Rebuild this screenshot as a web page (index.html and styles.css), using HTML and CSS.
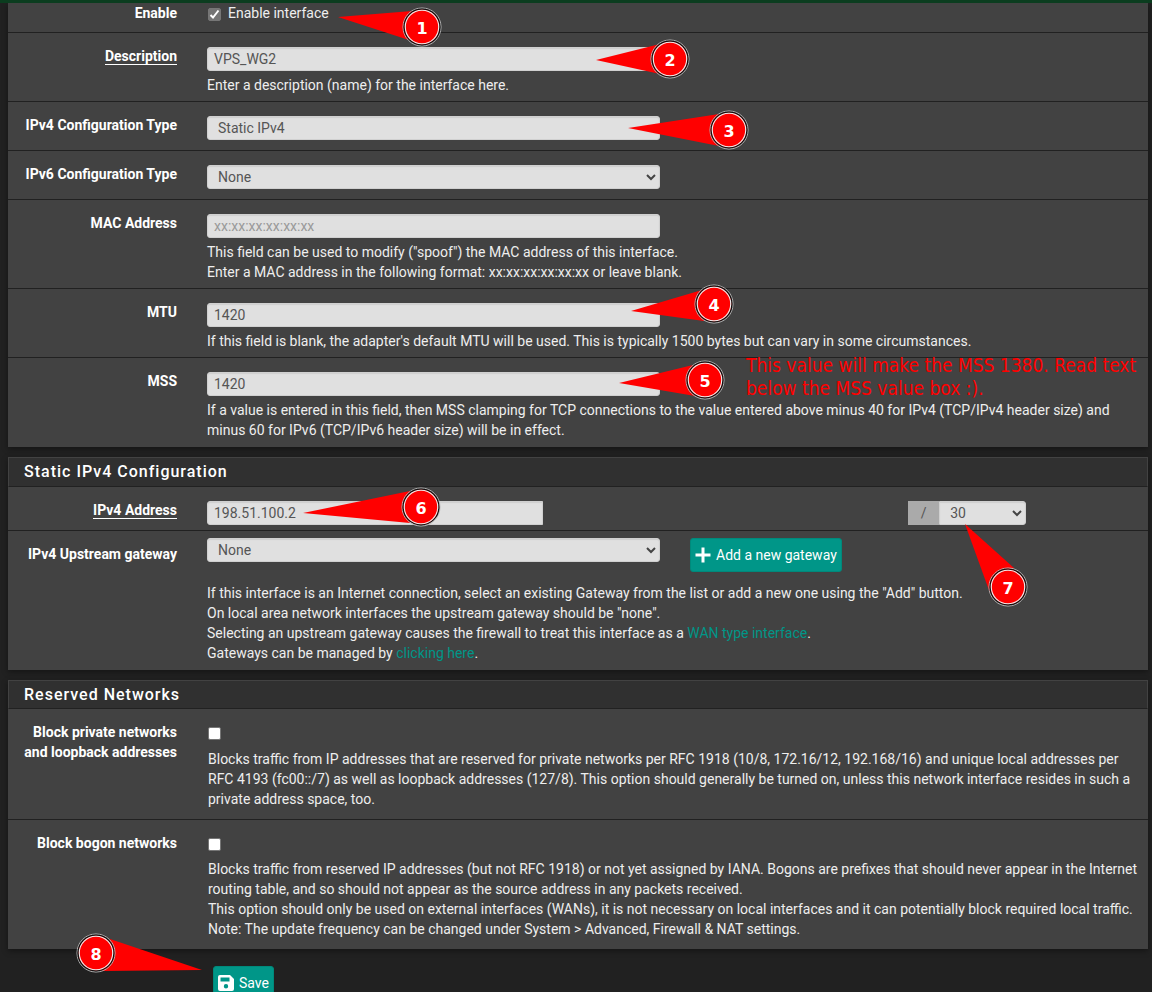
FILE: index.html
```html
<!DOCTYPE html>
<html lang="en">
<head>
<meta charset="utf-8">
<title>Interface configuration</title>
<link rel="stylesheet" href="styles.css">
</head>
<body>
<div class="viewport">
<form class="page">
  <section class="panel panel-first">
    <div class="row row-top">
      <span class="label">Enable</span>
      <div class="content">
        <label class="check-line"><input type="checkbox" class="check" checked> Enable interface</label>
      </div>
    </div>
    <div class="row with-help">
      <label class="label" for="descr"><span class="required">Description</span></label>
      <div class="content">
        <input class="control" id="descr" type="text" value="VPS_WG2">
        <p class="help">Enter a description (name) for the interface here.</p>
      </div>
    </div>
    <div class="row">
      <label class="label" for="type4">IPv4 Configuration Type</label>
      <div class="content">
        <select class="control select plain" id="type4"><option>Static IPv4</option></select>
      </div>
    </div>
    <div class="row">
      <label class="label" for="type6">IPv6 Configuration Type</label>
      <div class="content">
        <select class="control select" id="type6"><option>None</option></select>
      </div>
    </div>
    <div class="row with-help">
      <label class="label" for="mac">MAC Address</label>
      <div class="content">
        <input class="control" id="mac" type="text" placeholder="xx:xx:xx:xx:xx:xx">
        <p class="help">This field can be used to modify ("spoof") the MAC address of this interface.<br>Enter a MAC address in the following format: xx:xx:xx:xx:xx:xx or leave blank.</p>
      </div>
    </div>
    <div class="row with-help">
      <label class="label" for="mtu">MTU</label>
      <div class="content">
        <input class="control" id="mtu" type="text" value="1420">
        <p class="help">If this field is blank, the adapter's default MTU will be used. This is typically 1500 bytes but can vary in some circumstances.</p>
      </div>
    </div>
    <div class="row with-help">
      <label class="label" for="mss">MSS</label>
      <div class="content">
        <input class="control" id="mss" type="text" value="1420">
        <p class="help">If a value is entered in this field, then MSS clamping for TCP connections to the value entered above minus 40 for IPv4 (TCP/IPv4 header size) and minus 60 for IPv6 (TCP/IPv6 header size) will be in effect.</p>
      </div>
    </div>
  </section>

  <section class="panel">
    <h2 class="panel-title">Static IPv4 Configuration</h2>
    <div class="row tight">
      <label class="label" for="ipaddr"><span class="required">IPv4 Address</span></label>
      <div class="content address">
        <input class="control address-input" id="ipaddr" type="text" value="198.51.100.2">
        <div class="mask">
          <span class="slash">/</span>
          <select class="control select mask-select" aria-label="Subnet mask"><option>30</option></select>
        </div>
      </div>
    </div>
    <div class="row gateway-row">
      <label class="label" for="gateway">IPv4 Upstream gateway</label>
      <div class="content">
        <div class="gateway">
          <select class="control select" id="gateway"><option>None</option></select>
          <button class="button" type="button">
            <svg class="icon" viewBox="0 0 16 16" aria-hidden="true"><path d="M6.5 0.5h3v6h6v3h-6v6h-3v-6h-6v-3h6z" fill="#fff"/></svg>
            Add a new gateway
          </button>
        </div>
        <p class="help gateway-help">If this interface is an Internet connection, select an existing Gateway from the list or add a new one using the "Add" button.<br>On local area network interfaces the upstream gateway should be "none".<br>Selecting an upstream gateway causes the firewall to treat this interface as a <a href="#">WAN type interface</a>.<br>Gateways can be managed by <a href="#">clicking here</a>.</p>
      </div>
    </div>
  </section>

  <section class="panel">
    <h2 class="panel-title compact">Reserved Networks</h2>
    <div class="row">
      <label class="label" for="private">Block private networks and loopback addresses</label>
      <div class="content reserved">
        <input type="checkbox" class="check" id="private">
        <p class="help">Blocks traffic from IP addresses that are reserved for private networks per RFC 1918 (10/8, 172.16/12, 192.168/16) and unique local addresses per RFC 4193 (fc00::/7) as well as loopback addresses (127/8). This option should generally be turned on, unless this network interface resides in such a private address space, too.</p>
      </div>
    </div>
    <div class="row">
      <label class="label" for="bogon">Block bogon networks</label>
      <div class="content reserved">
        <input type="checkbox" class="check" id="bogon">
        <p class="help">Blocks traffic from reserved IP addresses (but not RFC 1918) or not yet assigned by IANA. Bogons are prefixes that should never appear in the Internet routing table, and so should not appear as the source address in any packets received.<br>This option should only be used on external interfaces (WANs), it is not necessary on local interfaces and it can potentially block required local traffic.<br>Note: The update frequency can be changed under System &gt; Advanced, Firewall &amp; NAT settings.</p>
      </div>
    </div>
  </section>

  <div class="actions">
    <button class="button" type="submit">
      <svg class="icon" viewBox="0 0 16 16" aria-hidden="true"><path fill="#fff" fill-rule="evenodd" d="M2 0h10l4 4v10a2 2 0 0 1-2 2H2a2 2 0 0 1-2-2V2a2 2 0 0 1 2-2zM2.500 2.500v4h9v-4zM8 9a2.200 2.200 0 1 0 0 4.400A2.200 2.200 0 0 0 8 9z"/></svg>
      Save
    </button>
  </div>
</form>

<svg class="callouts" width="1152" height="992" viewBox="0 0 1152 992">
  <defs>
    <g id="disc">
      <circle r="18" fill="#f00"/>
      <circle r="19" fill="none" stroke="#bbb"/>
      <circle r="17.900" fill="none" stroke="#111" stroke-width="1.300"/>
      <circle r="16.700" fill="none" stroke="#eee" stroke-width="1.100"/>
    </g>
  </defs>
  <g fill="#f00">
    <path d="M338 17L412 11L412 41z"/>
    <path d="M596 60L660 44L660 74z"/>
    <path d="M628 128L719 114L719 146z"/>
    <path d="M631 311L702 290L704 321z"/>
    <path d="M619 383L693 365L695 396z"/>
    <path d="M303 513L410 491L410 523z"/>
    <path d="M965 524L1014 568L990 593z"/>
    <path d="M202 970L110 939L102 971z"/>
  </g>
  <use href="#disc" x="422" y="27"/>
  <use href="#disc" x="670" y="59"/>
  <use href="#disc" x="729" y="130"/>
  <use href="#disc" x="714" y="304"/>
  <use href="#disc" x="705" y="380"/>
  <use href="#disc" x="421" y="507"/>
  <use href="#disc" x="1008" y="587"/>
  <use href="#disc" x="96" y="953"/>
  <g class="callout-numbers">
    <text x="422" y="34">1</text>
    <text x="670" y="66">2</text>
    <text x="729" y="137">3</text>
    <text x="714" y="311">4</text>
    <text x="705" y="387">5</text>
    <text x="421" y="514">6</text>
    <text x="1008" y="594">7</text>
    <text x="96" y="960">8</text>
  </g>
</svg>
<p class="note">This value will make the MSS 1380. Read text<br>below the MSS value box :).</p>
</div>
</body>
</html>
```

FILE: styles.css
```css
* {
  box-sizing: border-box;
}

body {
  margin: 0;
  background: #212121;
  color: #eee;
  font: 14px/20px Roboto, "Liberation Sans", sans-serif;
}

.viewport {
  position: relative;
  height: 100vh;
  overflow: hidden;
  border-top: 3px solid #0b3d1f;
}

.page {
  padding: 0 4px 0 8px;
}

.panel {
  margin-bottom: 10px;
  background: #424242;
  box-shadow: 0 2px 6px rgba(0, 0, 0, 0.4);
}

.panel-title {
  margin: 0;
  height: 30px;
  padding: 0 15px;
  border: 1px solid #424242;
  border-bottom-color: #212121;
  background: #303030;
  color: #fff;
  font-size: 16px;
  font-weight: 500;
  line-height: 28px;
  letter-spacing: 1px;
}

.panel-title.compact {
  height: 29px;
}

.row {
  display: grid;
  grid-template-columns: 169px minmax(0, 1fr);
  column-gap: 30px;
  padding: 13px 9px 10px 0;
  border-bottom: 1px solid #212121;
}

.row:last-child {
  border-bottom: 0;
}

.content {
  padding-top: 1px;
}

.row-top {
  padding-top: 0;
  padding-bottom: 9px;
}

.row-top .content,
.content.reserved {
  padding-top: 0;
}

.with-help {
  padding-bottom: 6px;
}

.with-help:last-child {
  padding-bottom: 7px;
}

.tight {
  padding-bottom: 5px;
}

.gateway-row {
  padding-top: 6px;
  padding-bottom: 7px;
}

.gateway-row .label {
  padding-top: 7px;
}

.label {
  padding-left: 15px;
  color: #fff;
  font-weight: 700;
  text-align: right;
}

.required {
  display: inline-block;
  height: 19px;
  border-bottom: 1px solid #fff;
}

.help {
  margin: 4px 0 0;
}

.help a {
  color: #009688;
  text-decoration: none;
}

.control {
  display: block;
  width: calc(50% - 13px);
  height: 24px;
  margin: 0;
  padding: 0 6px;
  border: 1px solid #d0d0d0;
  border-radius: 3px;
  background-color: #e0e0e0;
  box-shadow: inset 0 1px 1px rgba(0, 0, 0, 0.08);
  color: #555;
  font: inherit;
}

.control::placeholder {
  color: #999;
  opacity: 1;
}

.select {
  appearance: none;
  padding: 0 10px;
  background-image: url("data:image/svg+xml,%3Csvg xmlns='http://www.w3.org/2000/svg' width='10' height='7'%3E%3Cpath d='M1 1l4 4 4-4' fill='none' stroke='%23444' stroke-width='2'/%3E%3C/svg%3E");
  background-repeat: no-repeat;
  background-position: right 3px center;
}

.plain {
  background-image: none;
}

.check-line {
  display: flex;
  gap: 7px;
}

.check {
  appearance: none;
  flex: none;
  width: 13px;
  height: 13px;
  margin: 5px 0 0 1px;
  border: 1px solid #767676;
  border-radius: 2px;
  background: #fff;
}

.check:checked {
  background: #757575 url("data:image/svg+xml,%3Csvg xmlns='http://www.w3.org/2000/svg' width='11' height='11'%3E%3Cpath d='M1.500 6l2.500 2.500 5.500-7' fill='none' stroke='%23fff' stroke-width='2'/%3E%3C/svg%3E") center no-repeat;
}

.reserved .check {
  display: block;
}

.reserved .help {
  margin: 9px 0 0 1px;
}

.row:last-child .reserved .help {
  margin-top: 8px;
}

.address {
  display: flex;
}

.address-input {
  width: 36%;
  border-radius: 3px 0 0 3px;
}

.mask {
  display: flex;
  margin: 0 calc(12% + 1px) 0 auto;
}

.slash {
  width: 31px;
  background: #aaa;
  color: #555;
  line-height: 24px;
  text-align: center;
}

.mask-select {
  width: 87px;
  border-radius: 0 3px 3px 0;
}

.gateway {
  display: flex;
  align-items: flex-start;
  gap: 30px;
}

.gateway-help {
  margin-top: 11px;
}

.button {
  display: flex;
  align-items: center;
  gap: 5px;
  height: 34px;
  padding: 0 4px 1px;
  border: 1px solid #00897b;
  border-radius: 3px;
  background: #009688;
  color: #fff;
  font: inherit;
  white-space: nowrap;
}

.icon {
  width: 16px;
  height: 16px;
}

.actions {
  padding: 7px 0 0 205px;
}

.callouts {
  position: absolute;
  top: -3px;
  left: 0;
  pointer-events: none;
}

.callout-numbers {
  fill: #fff;
  font: 700 16px "DejaVu Sans", sans-serif;
  text-anchor: middle;
}

.note {
  position: absolute;
  top: 351px;
  left: 746px;
  margin: 0;
  color: #f00;
  font: 19px/23px "DejaVu Sans Condensed", "DejaVu Sans", sans-serif;
  white-space: nowrap;
}
```
